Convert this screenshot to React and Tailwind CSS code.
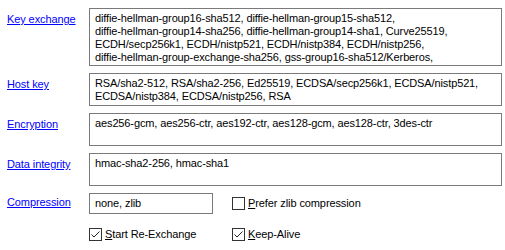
import React from "react";

const font = { fontFamily: "'Liberation Sans', Arial, sans-serif" };

function Box({ h, children }) {
  return (
    <div
      className={`border border-[#7a7a7a] bg-white px-[5px] pt-[3px] text-[11px] leading-[13px] tracking-[-0.12px] text-black whitespace-nowrap overflow-hidden ${h}`}
    >
      {children}
    </div>
  );
}

function Label({ children }) {
  return (
    <div className="pt-[5px] text-[11px] leading-[13px] tracking-[-0.1px]">
      <span className="text-[#0000ff] underline">{children}</span>
    </div>
  );
}

function Check({ checked }) {
  return (
    <div className="w-[13px] h-[13px] border border-[#333] bg-white flex items-center justify-center">
      {checked && (
        <svg width="11" height="11" viewBox="0 0 11 11">
          <path d="M1.5 5.5 L4 8 L9.5 2.5" fill="none" stroke="#222" strokeWidth="1" />
        </svg>
      )}
    </div>
  );
}

export default function App() {
  return (
    <div
      className="w-[505px] h-[250px] bg-white pl-[7px] pt-[8px] text-black"
      style={font}
    >
      <div className="grid grid-cols-[82px_413px] gap-y-[7px]">
        <Label>Key exchange</Label>
        <Box h="h-[58px]">
          <div>diffie-hellman-group16-sha512, diffie-hellman-group15-sha512,</div>
          <div>diffie-hellman-group14-sha256, diffie-hellman-group14-sha1, Curve25519,</div>
          <div>ECDH/secp256k1, ECDH/nistp521, ECDH/nistp384, ECDH/nistp256,</div>
          <div>diffie-hellman-group-exchange-sha256, gss-group16-sha512/Kerberos,</div>
        </Box>
        <Label>Host key</Label>
        <Box h="h-[33px]">
          <div>RSA/sha2-512, RSA/sha2-256, Ed25519, ECDSA/secp256k1, ECDSA/nistp521,</div>
          <div>ECDSA/nistp384, ECDSA/nistp256, RSA</div>
        </Box>
        <Label>Encryption</Label>
        <Box h="h-[33px]">
          <div>aes256-gcm, aes256-ctr, aes192-ctr, aes128-gcm, aes128-ctr, 3des-ctr</div>
        </Box>
        <Label>Data integrity</Label>
        <Box h="h-[33px]">
          <div>hmac-sha2-256, hmac-sha1</div>
        </Box>
        <div className="pt-[3px] text-[11px] leading-[13px] tracking-[-0.1px]">
          <span className="text-[#0000ff] underline">Compression</span>
        </div>
        <div className="flex items-center tracking-[-0.1px]">
          <div className="w-[124px] h-[21px] border border-[#7a7a7a] px-[5px] pt-[3px] text-[11px] leading-[13px]">
            none, zlib
          </div>
          <div className="ml-[19px] flex items-center gap-[3px] text-[11px] leading-[13px]">
            <Check />
            <span>
              <span className="underline">P</span>refer zlib compression
            </span>
          </div>
        </div>
        <div />
        <div className="flex items-center mt-[7px] tracking-[-0.1px]">
          <div className="w-[143px] flex items-center gap-[3px] text-[11px] leading-[13px]">
            <Check checked />
            <span>
              <span className="underline">S</span>tart Re-Exchange
            </span>
          </div>
          <div className="flex items-center gap-[3px] text-[11px] leading-[13px]">
            <Check checked />
            <span>
              <span className="underline">K</span>eep-Alive
            </span>
          </div>
        </div>
      </div>
    </div>
  );
}
